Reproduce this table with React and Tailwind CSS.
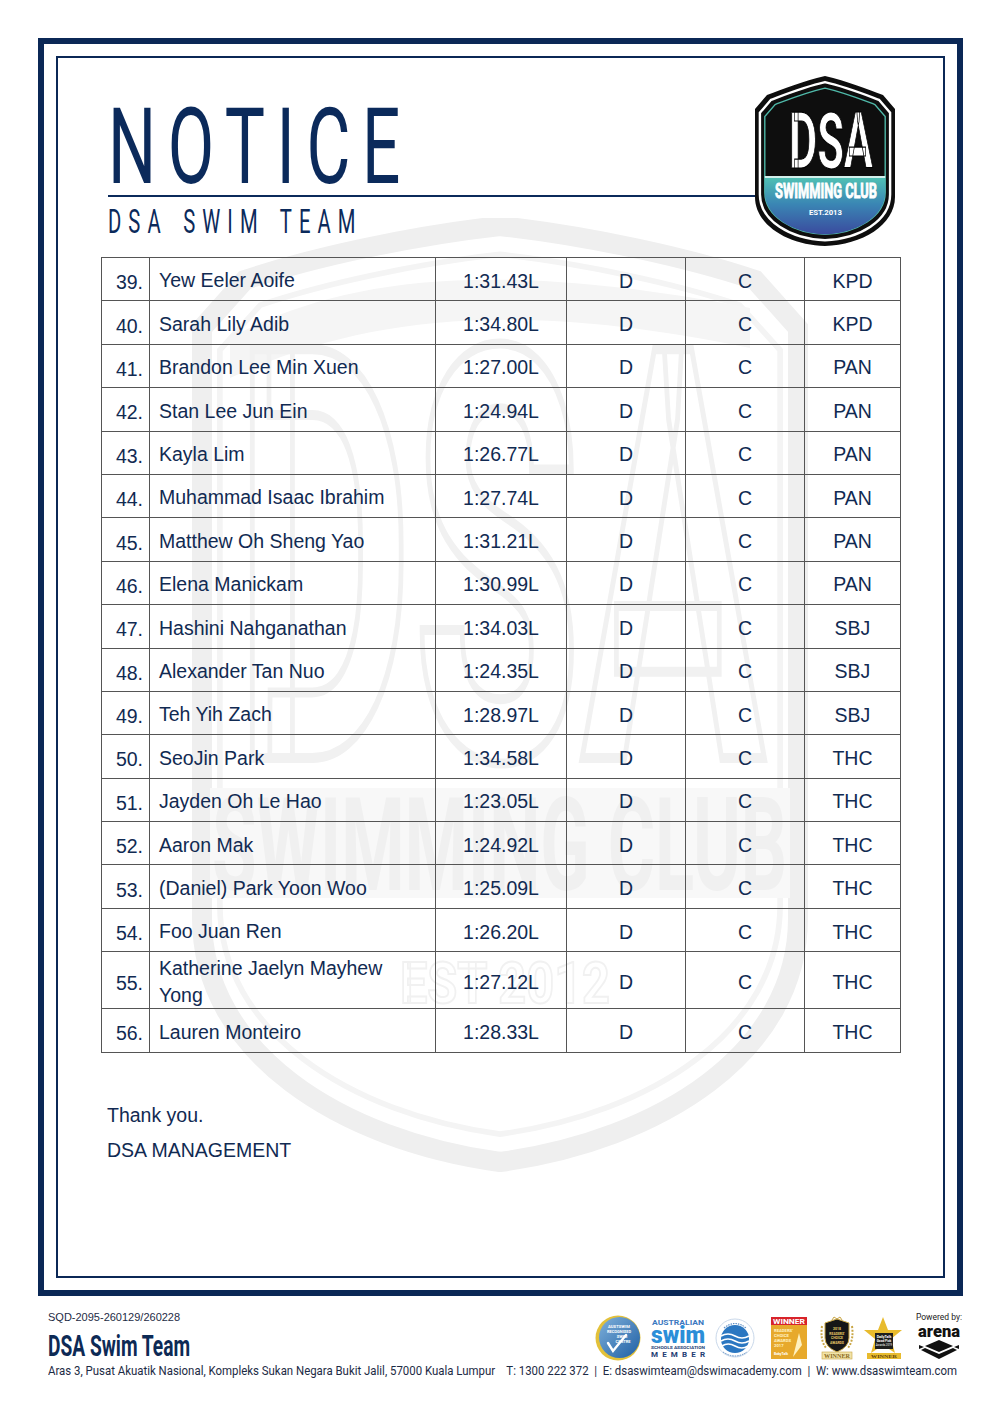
import React from "react";

const rows = [
  ["39.", "Yew Eeler Aoife", "1:31.43L", "KPD"],
  ["40.", "Sarah Lily Adib", "1:34.80L", "KPD"],
  ["41.", "Brandon Lee Min Xuen", "1:27.00L", "PAN"],
  ["42.", "Stan Lee Jun Ein", "1:24.94L", "PAN"],
  ["43.", "Kayla Lim", "1:26.77L", "PAN"],
  ["44.", "Muhammad Isaac Ibrahim", "1:27.74L", "PAN"],
  ["45.", "Matthew Oh Sheng Yao", "1:31.21L", "PAN"],
  ["46.", "Elena Manickam", "1:30.99L", "PAN"],
  ["47.", "Hashini Nahganathan", "1:34.03L", "SBJ"],
  ["48.", "Alexander Tan Nuo", "1:24.35L", "SBJ"],
  ["49.", "Teh Yih Zach", "1:28.97L", "SBJ"],
  ["50.", "SeoJin Park", "1:34.58L", "THC"],
  ["51.", "Jayden Oh Le Hao", "1:23.05L", "THC"],
  ["52.", "Aaron Mak", "1:24.92L", "THC"],
  ["53.", "(Daniel) Park Yoon Woo", "1:25.09L", "THC"],
  ["54.", "Foo Juan Ren", "1:26.20L", "THC"],
  ["55.", "Katherine Jaelyn Mayhew|Yong", "1:27.12L", "THC"],
  ["56.", "Lauren Monteiro", "1:28.33L", "THC"],
];

const SHIELD =
  "M72 1 C50 6 30 14 14 20 L2 34 L2 122 C2 150 35 170 72 171 C109 170 142 150 142 122 L142 34 L130 20 C114 14 94 6 72 1 Z";

function Logo() {
  return (
    <svg width="146" height="172" viewBox="-1 0 146 172">
      <defs>
        <linearGradient id="lgBand" x1="0" y1="0" x2="0" y2="1">
          <stop offset="0" stopColor="#52c4b4" />
          <stop offset="0.35" stopColor="#3a86b4" />
          <stop offset="0.7" stopColor="#3a4fa0" />
          <stop offset="1" stopColor="#3d2682" />
        </linearGradient>
        <clipPath id="clipInner">
          <path d={SHIELD} transform="translate(72 88) scale(0.86) translate(-72 -88)" />
        </clipPath>
      </defs>
      <path d={SHIELD} fill="#0e0e0e" />
      <path
        d={SHIELD}
        transform="translate(72 88) scale(0.93) translate(-72 -88)"
        fill="none"
        stroke="#ffffff"
        strokeWidth="2.6"
      />
      <path
        d={SHIELD}
        transform="translate(72 88) scale(0.86) translate(-72 -88)"
        fill="#0e0e0e"
        stroke="#4fb9a9"
        strokeWidth="1.6"
      />
      <g clipPath="url(#clipInner)">
        <rect x="0" y="101" width="146" height="80" fill="url(#lgBand)" />
        <line x1="0" y1="102" x2="146" y2="102" stroke="#ffffff" strokeWidth="1.6" />
      </g>
      <text
        x="36"
        y="93"
        fontFamily="Roboto, 'DejaVu Sans', sans-serif"
        fontWeight="700"
        fontSize="78"
        textLength="84"
        lengthAdjust="spacingAndGlyphs"
        fill="#ffffff"
        stroke="#000000"
        strokeWidth="1.2"
      >
        DSA
      </text>
      <text
        x="22"
        y="123"
        fontFamily="Roboto, 'DejaVu Sans', sans-serif"
        fontWeight="700"
        fontSize="21"
        textLength="102"
        lengthAdjust="spacingAndGlyphs"
        fill="#ffffff"
        stroke="#ffffff"
        strokeWidth="0.9"
      >
        SWIMMING CLUB
      </text>
      <text
        x="56"
        y="140"
        fontFamily="Roboto, 'DejaVu Sans', sans-serif"
        fontWeight="700"
        fontSize="7"
        textLength="33"
        lengthAdjust="spacingAndGlyphs"
        fill="#ffffff"
      >
        EST.2013
      </text>
    </svg>
  );
}

const WM =
  "M310 8 C220 18 120 40 55 62 L12 110 L12 700 C12 835 150 922 310 944 C470 922 608 835 608 700 L608 110 L565 62 C500 40 400 18 310 8 Z";

function Watermark() {
  return (
    <svg
      className="absolute left-[190px] top-[218px] -z-10"
      width="620"
      height="955"
      viewBox="0 0 620 955"
    >
      <path d={WM} fill="none" stroke="#efefef" strokeWidth="20" />
      <path
        d={WM}
        transform="translate(310 480) scale(0.94) translate(-310 -480)"
        fill="none"
        stroke="#f4f4f4"
        strokeWidth="6"
      />
      <path
        d="M40 120 C150 60 300 40 560 90 L560 130 C320 80 170 100 40 160 Z"
        fill="#f5f5f5"
      />
      <text
        x="45"
        y="540"
        fontFamily="Roboto, sans-serif"
        fontWeight="700"
        fontSize="575"
        textLength="530"
        lengthAdjust="spacingAndGlyphs"
        fill="none"
        stroke="#f1f1f1"
        strokeWidth="10"
      >
        DSA
      </text>
      <rect x="20" y="570" width="580" height="110" fill="#f8f8f8" />
      <text
        x="22"
        y="672"
        fontFamily="Roboto, sans-serif"
        fontWeight="700"
        fontSize="130"
        textLength="575"
        lengthAdjust="spacingAndGlyphs"
        fill="#f0f0f0"
      >
        SWIMMING CLUB
      </text>
      <text
        x="210"
        y="785"
        fontFamily="Roboto, sans-serif"
        fontWeight="700"
        fontSize="58"
        textLength="210"
        lengthAdjust="spacingAndGlyphs"
        fill="#ffffff"
        stroke="#f1f1f1"
        strokeWidth="2"
      >
        EST 2012
      </text>
    </svg>
  );
}

function AustswimBadge() {
  return (
    <svg width="46" height="46" viewBox="0 0 46 46">
      <defs>
        <linearGradient id="asg" x1="0" y1="0" x2="1" y2="1">
          <stop offset="0" stopColor="#7fb0da" />
          <stop offset="1" stopColor="#1f5fa4" />
        </linearGradient>
      </defs>
      <circle cx="23" cy="23" r="22.5" fill="#e3c13a" />
      <circle cx="24.5" cy="22.5" r="20.5" fill="url(#asg)" />
      <text x="24" y="13" textAnchor="middle" fontFamily="Roboto, sans-serif" fontWeight="700" fontSize="4.2" fill="#fff">AUSTSWIM</text>
      <text x="24" y="18" textAnchor="middle" fontFamily="Roboto, sans-serif" fontWeight="700" fontSize="4" fill="#fff">RECOGNISED</text>
      <text x="27" y="23" textAnchor="middle" fontFamily="Roboto, sans-serif" fontWeight="700" fontSize="4" fill="#fff">SWIM</text>
      <text x="28" y="28" textAnchor="middle" fontFamily="Roboto, sans-serif" fontWeight="700" fontSize="4" fill="#fff">CENTRE</text>
      <path d="M13 28 L18 36 L31 20" fill="none" stroke="#fff" strokeWidth="2.4" strokeLinecap="round" />
    </svg>
  );
}

function AustralianSwim() {
  return (
    <svg width="56" height="44" viewBox="0 0 56 44">
      <text x="28" y="9" textAnchor="middle" fontFamily="Roboto, sans-serif" fontWeight="700" fontSize="7.6" fill="#3a78c0" textLength="52" lengthAdjust="spacingAndGlyphs">AUSTRALIAN</text>
      <text x="28" y="27" textAnchor="middle" fontFamily="Roboto, sans-serif" fontWeight="900" fontSize="23" fill="#2b8ed8" textLength="54" lengthAdjust="spacingAndGlyphs">swim</text>
      <text x="28" y="32.5" textAnchor="middle" fontFamily="Roboto, sans-serif" fontWeight="700" fontSize="3.6" fill="#233d73" textLength="54" lengthAdjust="spacingAndGlyphs">SCHOOLS ASSOCIATION</text>
      <text x="28" y="41" textAnchor="middle" fontFamily="Roboto, sans-serif" fontWeight="700" fontSize="8" fill="#233d73" textLength="54" lengthAdjust="spacing">MEMBER</text>
    </svg>
  );
}

function WaveBadge() {
  return (
    <svg width="40" height="40" viewBox="0 0 40 40">
      <circle cx="20" cy="20" r="19" fill="#ffffff" stroke="#c9d8ea" strokeWidth="1" />
      <circle cx="20" cy="21" r="14" fill="#2b77c1" />
      <path d="M6 18 Q13 14 20 18 T34 18" fill="none" stroke="#ffffff" strokeWidth="1.6" />
      <path d="M6 23 Q13 19 20 23 T34 23" fill="none" stroke="#ffffff" strokeWidth="1.6" />
      <path d="M7 28 Q13 24 20 28 T33 28" fill="none" stroke="#ffffff" strokeWidth="1.6" />
      <path d="M9 10 Q20 1 31 10" fill="none" stroke="#5f8fc6" strokeWidth="1.2" strokeDasharray="1.5 1" />
      <path d="M8 34 Q20 42 32 34" fill="none" stroke="#5f8fc6" strokeWidth="1" strokeDasharray="1.5 1" />
    </svg>
  );
}

function WinnerBadge() {
  return (
    <svg width="36" height="42" viewBox="0 0 36 42">
      <rect x="0" y="0" width="36" height="8" fill="#d8232a" />
      <text x="18" y="6.6" textAnchor="middle" fontFamily="Roboto, sans-serif" fontWeight="700" fontSize="6.6" fill="#fff" textLength="32" lengthAdjust="spacingAndGlyphs">WINNER</text>
      <rect x="0" y="8" width="36" height="34" fill="#e7a92c" />
      <text x="3" y="15" fontFamily="Roboto, sans-serif" fontWeight="700" fontSize="4.2" fill="#fff3c4">READERS'</text>
      <text x="3" y="20" fontFamily="Roboto, sans-serif" fontWeight="700" fontSize="4.2" fill="#fff3c4">CHOICE</text>
      <text x="3" y="25" fontFamily="Roboto, sans-serif" fontWeight="700" fontSize="4.2" fill="#fff3c4">AWARDS</text>
      <text x="3" y="30" fontFamily="Roboto, sans-serif" fontWeight="700" fontSize="4.2" fill="#fff3c4">2017</text>
      <path d="M22 40 L28 16 L31 28 Z" fill="#fff1bf" />
      <text x="3" y="38" fontFamily="Roboto, sans-serif" fontWeight="700" fontSize="3.4" fill="#fff">BabyTalk</text>
    </svg>
  );
}

function ShieldBadge() {
  return (
    <svg width="42" height="44" viewBox="0 0 42 44">
      <path d="M6 10 Q4 24 10 32" fill="none" stroke="#c9a645" strokeWidth="2" strokeDasharray="2 1.4" />
      <path d="M36 10 Q38 24 32 32" fill="none" stroke="#c9a645" strokeWidth="2" strokeDasharray="2 1.4" />
      <path d="M21 3 L33 7 L33 22 Q33 31 21 36 Q9 31 9 22 L9 7 Z" fill="#161616" stroke="#c9a645" strokeWidth="1" />
      <path d="M16 4 L18 1 L21 3 L24 1 L26 4" fill="none" stroke="#c9a645" strokeWidth="1" />
      <text x="21" y="14" textAnchor="middle" fontFamily="Roboto, sans-serif" fontWeight="700" fontSize="3.4" fill="#e6c866">2018</text>
      <text x="21" y="18.5" textAnchor="middle" fontFamily="Roboto, sans-serif" fontWeight="700" fontSize="3.4" fill="#e6c866">READERS'</text>
      <text x="21" y="23" textAnchor="middle" fontFamily="Roboto, sans-serif" fontWeight="700" fontSize="3.4" fill="#e6c866">CHOICE</text>
      <text x="21" y="27.5" textAnchor="middle" fontFamily="Roboto, sans-serif" fontWeight="700" fontSize="3.4" fill="#e6c866">AWARDS</text>
      <rect x="6" y="36" width="30" height="7" fill="#f1e3a8" stroke="#c9a645" strokeWidth="0.6" />
      <text x="21" y="41.6" textAnchor="middle" fontFamily="'Liberation Serif', serif" fontWeight="700" fontSize="5.2" fill="#8b6a1c" textLength="26" lengthAdjust="spacingAndGlyphs">WINNER</text>
    </svg>
  );
}

function StarBadge() {
  return (
    <svg width="42" height="44" viewBox="0 0 42 44">
      <path d="M21 1 L26 14 L40 14 L29 23 L33 37 L21 29 L9 37 L13 23 L2 14 L16 14 Z" fill="#e8bb2e" />
      <rect x="13" y="17" width="18" height="16" fill="#1d1d1d" />
      <text x="22" y="22" textAnchor="middle" fontFamily="Roboto, sans-serif" fontWeight="700" fontSize="3.6" fill="#fff">DailyTalk</text>
      <text x="22" y="26" textAnchor="middle" fontFamily="Roboto, sans-serif" fontWeight="700" fontSize="3.2" fill="#fff">Good Pick</text>
      <text x="22" y="30" textAnchor="middle" fontFamily="Roboto, sans-serif" fontSize="2.8" fill="#fff">Awards 2019</text>
      <rect x="5" y="37" width="34" height="6" fill="#e8bb2e" />
      <text x="22" y="42" textAnchor="middle" fontFamily="'Liberation Serif', serif" fontWeight="700" fontSize="5" fill="#5a3e07" textLength="26" lengthAdjust="spacingAndGlyphs">WINNER</text>
    </svg>
  );
}

function Arena() {
  return (
    <div className="flex flex-col items-center w-[46px]">
      <div
        className="text-[8.5px] leading-[10px] text-[#222] whitespace-nowrap"
        style={{ fontFamily: "Roboto, 'Liberation Sans', sans-serif" }}
      >
        Powered by:
      </div>
      <svg width="44" height="36" viewBox="0 0 44 36" className="mt-[2px]">
        <text x="22" y="13" textAnchor="middle" fontFamily="Roboto, 'Liberation Sans', sans-serif" fontWeight="900" fontSize="17" fill="#111" textLength="42" lengthAdjust="spacingAndGlyphs">arena</text>
        <path d="M22 16 L36 22 L22 28 L8 22 Z" fill="#111" />
        <path d="M8 24 L22 30 L36 24 L40 26 L22 35 L4 26 Z" fill="#111" />
        <path d="M2 21 L7 23 L2 25 Z" fill="#111" />
        <path d="M42 21 L37 23 L42 25 Z" fill="#111" />
      </svg>
    </div>
  );
}

const TXT = "text-[#112a52]";

export default function App() {
  return (
    <div
      className="relative isolate w-[999px] h-[1415px] bg-white overflow-hidden"
      style={{ fontFamily: "'Liberation Sans', Arial, sans-serif" }}
    >
      <Watermark />
      <div className="pt-[38px] pl-[38px]">
        <div className="w-[925px] h-[1258px] border-[6px] border-[#0b2856] p-[12px]">
          <div className="h-full border-2 border-[#0b2856]">
            {/* Header */}
            <div className="flex items-start">
              <div className="w-[697px] pl-[50px] pt-[49px]">
                <div
                  className="h-[80px] text-[105.5px] leading-[80px] text-[#0b2a5b] whitespace-nowrap"
                  style={{ fontFamily: "Roboto, sans-serif", fontWeight: 400 }}
                >
                  <span className="inline-block origin-left scale-x-[0.64] tracking-[18px]">NOTICE</span>
                </div>
                <div className="mt-[8px] h-[2px] bg-[#0b2a5b]" />
                <div
                  className="mt-[10.5px] h-[28px] text-[33.8px] leading-[28px] text-[#0b2a5b] whitespace-nowrap"
                  style={{ fontFamily: "Roboto, sans-serif", fontWeight: 400 }}
                >
                  <span className="inline-block origin-left scale-x-[0.6] tracking-[11.7px] [word-spacing:6px]">
                    DSA SWIM TEAM
                  </span>
                </div>
              </div>
              <div className="mt-[17px] -ml-[3px]">
                <Logo />
              </div>
            </div>

            {/* Table */}
            <div className="ml-[43px] mt-[10px] w-[799px]">
              <table className={`w-[799px] table-fixed border-collapse text-[19.5px] ${TXT}`}>
                <colgroup>
                  <col className="w-[48px]" />
                  <col className="w-[286px]" />
                  <col className="w-[131px]" />
                  <col className="w-[119px]" />
                  <col className="w-[119px]" />
                  <col className="w-[96px]" />
                </colgroup>
                <tbody>
                  {rows.map((r) => {
                    const two = r[1].includes("|");
                    return (
                      <tr key={r[0]} className={two ? "h-[56px]" : "h-[43.4px]"}>
                        <td className="border border-[#555] text-right pr-[6px] pt-[6px] align-middle leading-[22px]">
                          {r[0]}
                        </td>
                        <td className="border border-[#555] pl-[9px] pt-[3px] align-middle leading-[26.5px]">
                          {two ? (
                            <>
                              {r[1].split("|")[0]}
                              <br />
                              {r[1].split("|")[1]}
                            </>
                          ) : (
                            r[1]
                          )}
                        </td>
                        <td className="border border-[#555] text-center pt-[3px] align-middle leading-[22px]">{r[2]}</td>
                        <td className="border border-[#555] text-center pt-[3px] align-middle leading-[22px]">D</td>
                        <td className="border border-[#555] text-center pt-[3px] align-middle leading-[22px]">C</td>
                        <td className="border border-[#555] text-center pt-[3px] align-middle leading-[22px]">{r[3]}</td>
                      </tr>
                    );
                  })}
                </tbody>
              </table>
            </div>

            {/* Closing */}
            <div className={`ml-[49px] mt-[45px] text-[19.5px] leading-[35px] ${TXT}`}>
              <div>Thank you.</div>
              <div>DSA MANAGEMENT</div>
            </div>
          </div>
        </div>
      </div>

      {/* Footer */}
      <div className="pl-[48px] pr-[37px] mt-[15px]">
        <div className="flex justify-between items-start h-[53px]">
          <div>
            <div className="text-[11px] leading-[13px] text-[#1d2b45]">SQD-2095-260129/260228</div>
            <div
              className="mt-[10px] h-[24px] text-[29.5px] leading-[24px] text-[#0d2a55] whitespace-nowrap"
              style={{ fontFamily: "Roboto, sans-serif", fontWeight: 700 }}
            >
              <span className="inline-block origin-left scale-x-[0.65]">DSA Swim Team</span>
            </div>
          </div>
          <div className="flex items-center mt-[4px]">
            <AustswimBadge />
            <div className="ml-[9px]">
              <AustralianSwim />
            </div>
            <div className="ml-[9px]">
              <WaveBadge />
            </div>
            <div className="ml-[16px]">
              <WinnerBadge />
            </div>
            <div className="ml-[9px]">
              <ShieldBadge />
            </div>
            <div className="ml-[4px]">
              <StarBadge />
            </div>
            <div className="ml-[12px] -mt-[4px]">
              <Arena />
            </div>
          </div>
        </div>
        <div
          className="h-[14px] text-[12.7px] leading-[14px] text-[#1d2b45] whitespace-nowrap"
          style={{ fontFamily: "Roboto, sans-serif" }}
        >
          <span className="inline-block origin-left scale-x-[0.9]">
            Aras 3, Pusat Akuatik Nasional, Kompleks Sukan Negara Bukit Jalil, 57000 Kuala Lumpur&nbsp;&nbsp;&nbsp;&nbsp;T: 1300 222 372&nbsp;&nbsp;|&nbsp;&nbsp;E: dsaswimteam@dswimacademy.com&nbsp;&nbsp;|&nbsp;&nbsp;W: www.dsaswimteam.com
          </span>
        </div>
      </div>
    </div>
  );
}
